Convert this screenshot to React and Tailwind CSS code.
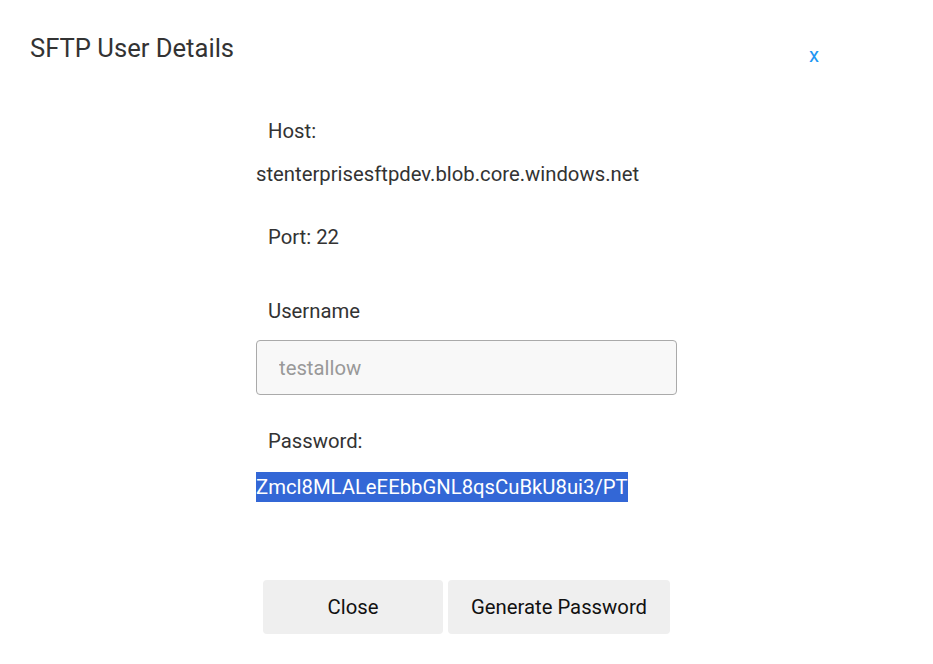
export default function App() {
  return (
    <div className="w-[933px] h-[664px] bg-white text-[#333333] overflow-hidden" style={{ fontFamily: 'Roboto, "Liberation Sans", sans-serif' }}>
      <div className="flex items-start justify-between pt-[33px] pl-[30px] pr-[114px]">
        <h2 className="text-[25.6px] leading-[30px] font-normal text-[#333333]">SFTP User Details</h2>
        <button className="mt-[11px] text-[20.3px] leading-[22px] text-[#2196f3]">x</button>
      </div>
      <div className="w-[421px] mx-auto mt-[50px] flex flex-col text-[20.3px] leading-[30px]">
        <div className="pl-[12px]">Host:</div>
        <div className="mt-[13px]">stenterprisesftpdev.blob.core.windows.net</div>
        <div className="pl-[12px] mt-[33px]">Port: 22</div>
        <div className="pl-[12px] mt-[44px]">Username</div>
        <input
          readOnly
          placeholder="testallow"
          className="mt-[14px] h-[55px] w-full rounded-[4px] border border-[#aaaaaa] bg-[#f8f8f8] px-[22px] text-[20.3px] placeholder:text-[#999999] outline-none"
        />
        <div className="pl-[12px] mt-[31px]">Password:</div>
        <div className="mt-[16px]">
          <span className="inline-block h-[30px] leading-[30px] bg-[#3367d6] text-white">Zmcl8MLALeEEbbGNL8qsCuBkU8ui3/PT</span>
        </div>
      </div>
      <div className="flex justify-center gap-[5px] mt-[78px]">
        <button className="w-[180px] h-[54px] rounded-[4px] bg-[#efefef] text-[20.3px] text-[#111111]">Close</button>
        <button className="w-[222px] h-[54px] rounded-[4px] bg-[#efefef] text-[20.3px] text-[#111111]">Generate Password</button>
      </div>
    </div>
  );
}
